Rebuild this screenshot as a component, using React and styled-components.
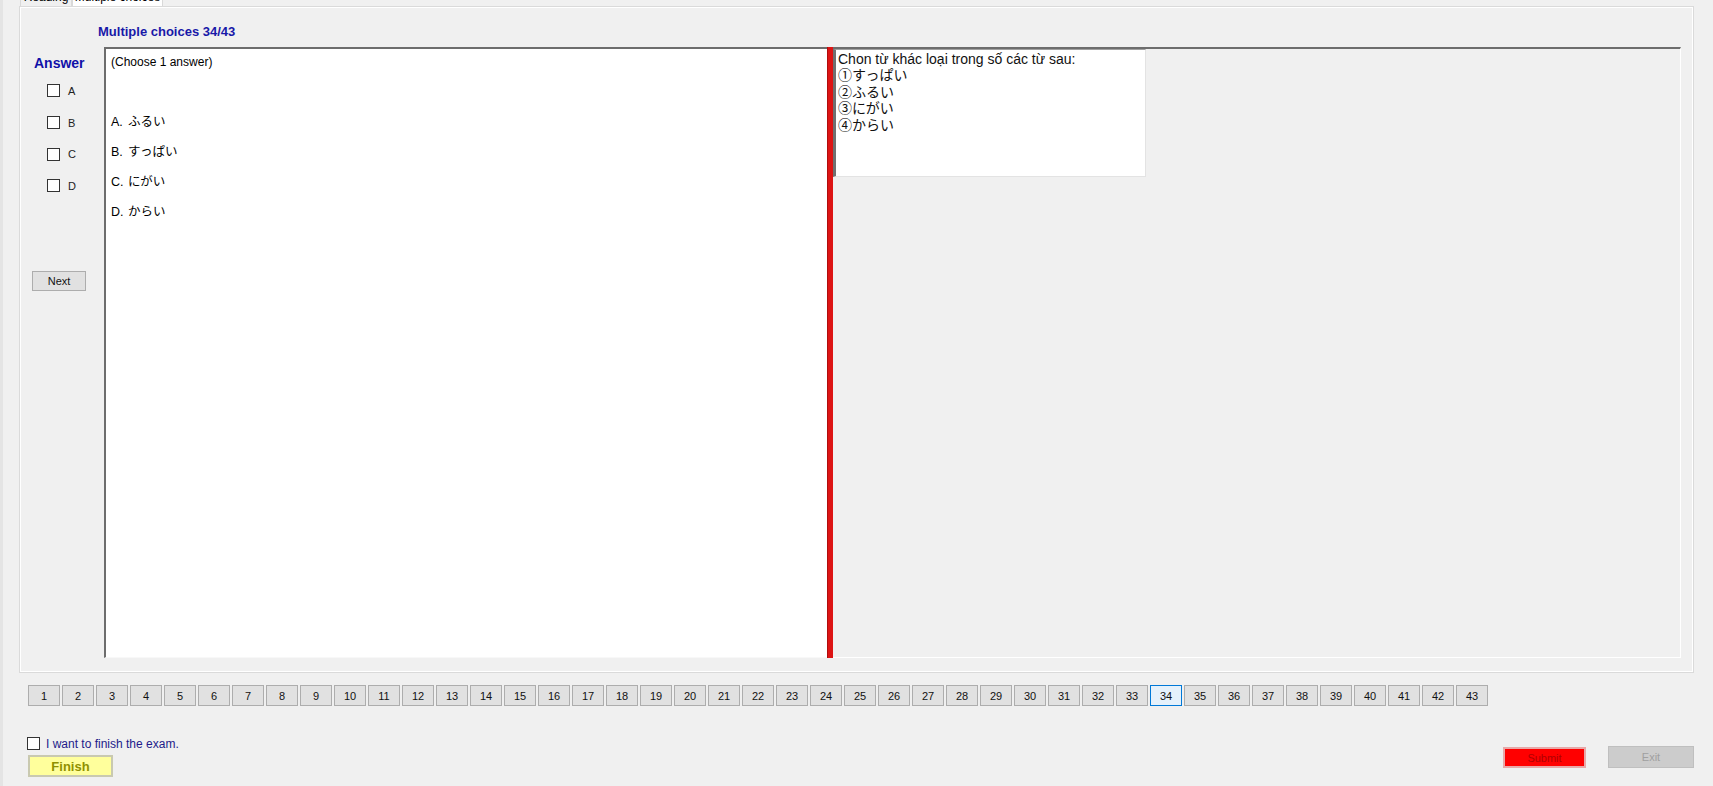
import React from 'react';
import styled, { createGlobalStyle } from 'styled-components';

const GlobalStyle = createGlobalStyle`
    html, body {
        margin: 0;
        padding: 0;
        background: #f0f0f0;
    }
    body {
        font-family: "Liberation Sans", Arial, "Noto Sans CJK JP", sans-serif;
        color: #000;
    }
`;

const Window = styled.div`
    width: 1713px;
    height: 786px;
    overflow: hidden;
    background: #f0f0f0;
    border-left: 3px solid #e4e4e4;
    box-sizing: border-box;
    display: flex;
    flex-direction: column;
`;

const TabStrip = styled.div`
    height: 7px;
    padding-left: 17px;
    display: flex;
    overflow: hidden;
`;

const Tab = styled.div`
    height: 7px;
    width: ${p => p.width}px;
    box-sizing: border-box;
    background: ${p => (p.active ? '#ffffff' : '#f0f0f0')};
    border: 1px solid #d9d9d9;
    border-top: none;
    border-bottom: none;
    font-size: 12px;
    display: flex;
    align-items: flex-end;
    justify-content: center;
    overflow: hidden;
    span {
        display: block;
        line-height: 12px;
        transform: translateY(-4px);
        white-space: nowrap;
    }
`;

const TabPanel = styled.div`
    margin-left: 17px;
    width: 1673px;
    height: 665px;
    box-sizing: border-box;
    border: 1px solid #ffffff;
    outline: 1px solid #dadada;
    display: flex;
    flex-direction: column;
`;

const Title = styled.div`
    padding: 16px 0 0 77px;
    height: 39px;
    box-sizing: border-box;
    font-size: 13px;
    line-height: 16px;
    font-weight: bold;
    color: #1818a8;
`;

const ContentRow = styled.div`
    display: flex;
    height: 611px;
    margin-right: 11px;
`;

const Sidebar = styled.div`
    width: 83px;
    flex-shrink: 0;
    display: flex;
    flex-direction: column;
`;

const AnswerLabel = styled.div`
    padding: 8px 0 0 13px;
    height: 28px;
    box-sizing: border-box;
    font-size: 14px;
    line-height: 16px;
    font-weight: bold;
    color: #1010a8;
`;

const ChoiceRow = styled.label`
    height: 31.7px;
    display: flex;
    align-items: center;
    padding-left: 26px;
    font-size: 11px;
    color: #222;
`;

const Box = styled.span`
    width: 13px;
    height: 13px;
    box-sizing: border-box;
    border: 1px solid #333;
    background: #fff;
    margin-right: ${p => p.gap || 8}px;
    flex-shrink: 0;
`;

const WinButton = styled.button`
    margin: 69px 0 0 11px;
    width: 54px;
    height: 20px;
    padding: 0;
    background: #e1e1e1;
    border: 1px solid #adadad;
    font-family: "Liberation Sans", Arial, sans-serif;
    font-size: 11px;
    color: #111;
`;

const QuestionPane = styled.div`
    width: 723px;
    flex-shrink: 0;
    box-sizing: border-box;
    background: #fff;
    border-top: 2px solid #6d6d6d;
    border-left: 2px solid #6d6d6d;
    border-bottom: 1px solid #f8f8f8;
    padding: 5px 0 0 5px;
    font-size: 12px;
`;

const Hint = styled.div`
    line-height: 16px;
    height: 53px;
`;

const Option = styled.div`
    height: 30px;
    line-height: 30px;
    font-size: 12.5px;
    span {
        display: inline-block;
        width: 17px;
    }
`;

const Splitter = styled.div`
    width: 6px;
    flex-shrink: 0;
    background: #dd1414;
    border-left: 1px solid #b00c0c;
    box-sizing: border-box;
`;

const ReferencePane = styled.div`
    flex: 1;
    border-top: 2px solid #6d6d6d;
    border-right: 1px solid #ffffff;
    border-bottom: 1px solid #ffffff;
    background: #f0f0f0;
    display: flex;
    align-items: flex-start;
`;

const ReferenceBox = styled.div`
    width: 313px;
    height: 128px;
    box-sizing: border-box;
    background: #fff;
    border-left: 3px solid #707070;
    border-top: 1px solid #a0a0a0;
    border-right: 1px solid #e3e3e3;
    border-bottom: 1px solid #e3e3e3;
    padding: 1px 0 0 2px;
    font-family: "Liberation Sans", Arial, "Noto Sans CJK JP", sans-serif;
    font-size: 14px;
    line-height: 16.4px;
    color: #111;
`;

const Pager = styled.div`
    display: flex;
    gap: 2px;
    margin: 13px 0 0 25px;
`;

const PageButton = styled.button`
    width: 32px;
    height: 21px;
    padding: 0;
    box-sizing: border-box;
    background: ${p => (p.current ? '#e5f1fb' : '#e1e1e1')};
    border: 1px solid ${p => (p.current ? '#0078d7' : '#adadad')};
    font-family: "Liberation Sans", Arial, sans-serif;
    font-size: 11px;
    color: #111;
`;

const Footer = styled.div`
    display: flex;
    justify-content: space-between;
    align-items: flex-end;
    margin-top: 31px;
    padding: 0 19px 0 24px;
`;

const FinishColumn = styled.div`
    display: flex;
    flex-direction: column;
`;

const FinishCheck = styled.label`
    display: flex;
    align-items: center;
    height: 13px;
    font-size: 12px;
    color: #231b8a;
`;

const FinishButton = styled.button`
    margin-top: 5px;
    margin-left: 1px;
    width: 85px;
    height: 22px;
    padding: 0;
    background: #ffff9c;
    border: 2px solid #c9c9b0;
    font-family: "Liberation Sans", Arial, sans-serif;
    font-size: 13px;
    font-weight: bold;
    color: #909000;
`;

const ActionGroup = styled.div`
    display: flex;
    gap: 22px;
    align-items: flex-end;
    margin-bottom: 9px;
`;

const SubmitButton = styled.button`
    width: 83px;
    height: 21px;
    padding: 0;
    background: #ff0000;
    border: 2px solid #e8a8a8;
    font-family: "Liberation Sans", Arial, sans-serif;
    font-size: 11px;
    color: #b00000;
`;

const ExitButton = styled.button`
    width: 86px;
    height: 22px;
    padding: 0;
    background: #cccccc;
    border: 1px solid #bfbfbf;
    font-family: "Liberation Sans", Arial, sans-serif;
    font-size: 11px;
    color: #a0a0a0;
`;

const choices = ['A', 'B', 'C', 'D'];
const options = [
    ['A.', 'ふるい'],
    ['B.', 'すっぱい'],
    ['C.', 'にがい'],
    ['D.', 'からい'],
];
const referenceLines = [
    'Chon từ khác loại trong số các từ sau:',
    '①すっぱい',
    '②ふるい',
    '③にがい',
    '④からい',
];
const pages = Array.from({ length: 43 }, (_, i) => i + 1);

export default function App() {
    return (
        <>
            <GlobalStyle />
            <Window>
                <TabStrip>
                    <Tab width={52}>
                        <span>Reading</span>
                    </Tab>
                    <Tab width={91} active>
                        <span>Multiple choices</span>
                    </Tab>
                </TabStrip>

                <TabPanel>
                    <Title>Multiple choices 34/43</Title>
                    <ContentRow>
                        {/* ANSWER SIDEBAR */}
                        <Sidebar>
                            <AnswerLabel>Answer</AnswerLabel>
                            {choices.map(c => (
                                <ChoiceRow key={`choice-${c}`}>
                                    <Box />
                                    {c}
                                </ChoiceRow>
                            ))}
                            <WinButton>Next</WinButton>
                        </Sidebar>

                        {/* QUESTION */}
                        <QuestionPane>
                            <Hint>(Choose 1 answer)</Hint>
                            {options.map(([letter, text]) => (
                                <Option key={`opt-${letter}`}>
                                    <span>{letter}</span>
                                    {text}
                                </Option>
                            ))}
                        </QuestionPane>

                        <Splitter />

                        {/* REFERENCE TEXT */}
                        <ReferencePane>
                            <ReferenceBox>
                                {referenceLines.map(line => (
                                    <div key={line}>{line}</div>
                                ))}
                            </ReferenceBox>
                        </ReferencePane>
                    </ContentRow>
                </TabPanel>

                <Pager>
                    {pages.map(n => (
                        <PageButton key={`page-${n}`} current={n === 34}>
                            {n}
                        </PageButton>
                    ))}
                </Pager>

                <Footer>
                    <FinishColumn>
                        <FinishCheck>
                            <Box gap={6} />
                            I want to finish the exam.
                        </FinishCheck>
                        <FinishButton>Finish</FinishButton>
                    </FinishColumn>
                    <ActionGroup>
                        <SubmitButton>Submit</SubmitButton>
                        <ExitButton disabled>Exit</ExitButton>
                    </ActionGroup>
                </Footer>
            </Window>
        </>
    );
}
